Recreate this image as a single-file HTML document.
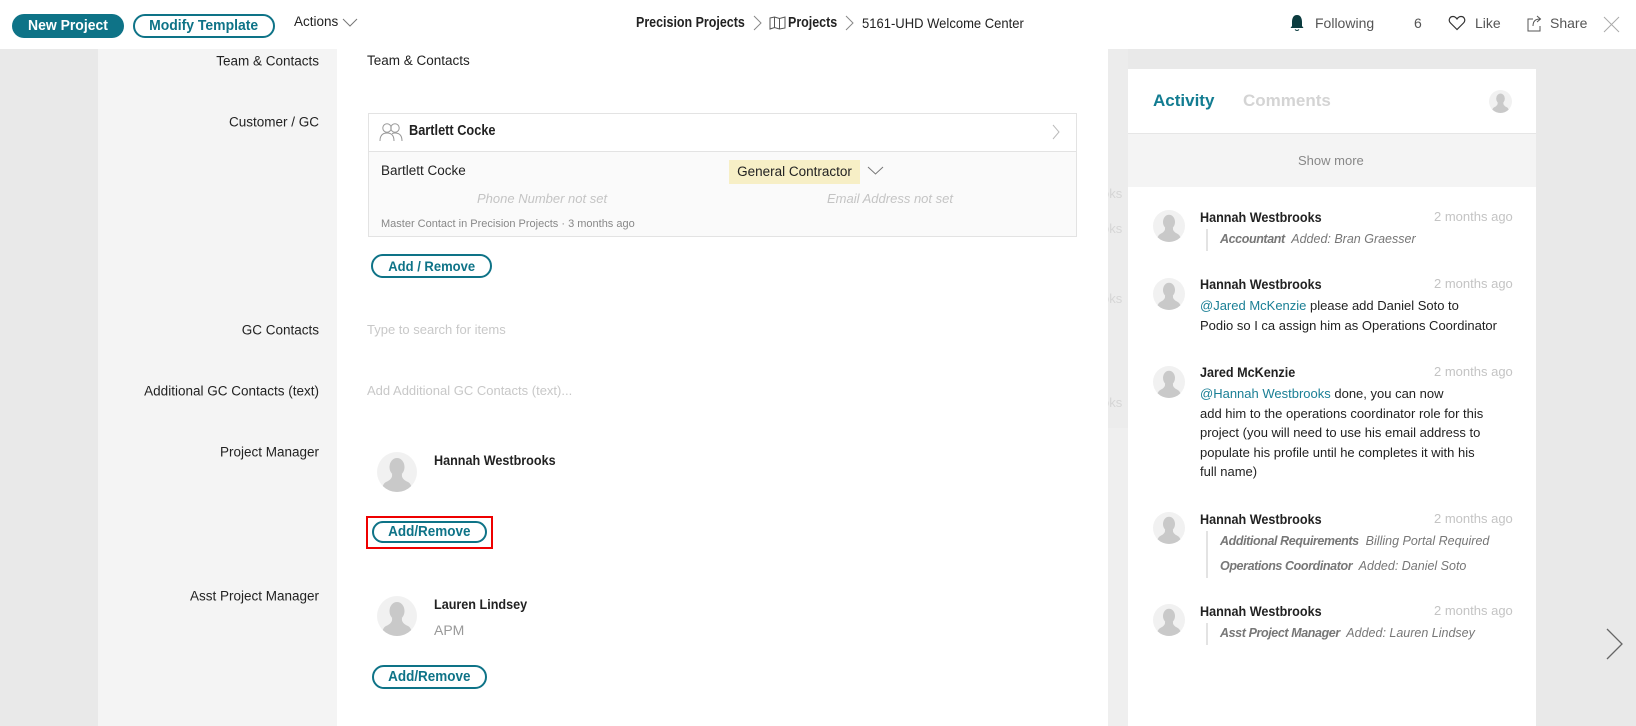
<!DOCTYPE html>
<html><head><meta charset="utf-8">
<style>
*{margin:0;padding:0;box-sizing:border-box}
body{width:1636px;height:726px;overflow:hidden;background:#e9e9e9;font-family:"Liberation Sans",sans-serif;font-size:13px;color:#222;position:relative}
.a{position:absolute;white-space:nowrap}
.hdr{position:absolute;left:0;top:0;width:1636px;height:49px;background:#fff}
.btn{position:absolute;border:2px solid #0e7387;border-radius:14px;color:#0e7387;font-size:14px;text-align:center;font-weight:bold}
.btn span{display:inline-block;transform:scaleX(.93)}
.lbl{position:absolute;right:1317px;white-space:nowrap;font-size:13.5px;color:#222;transform:translateY(-50%)}
.av{position:absolute;border-radius:50%;background:#f1f1f1;overflow:hidden}
.nm{font-weight:bold;font-size:14px;color:#222;transform:scaleX(.9);transform-origin:0 50%}
.tm{font-size:13px;color:#c4c4c4}
.lk{color:#1a7f95}
.sub{font-style:italic;color:#777;font-size:12.5px}
.sub b{font-weight:bold;font-size:12.5px;letter-spacing:-0.4px}
</style></head><body>
<svg width="0" height="0" style="position:absolute"><defs>
<symbol id="person" viewBox="0 0 40 40"><ellipse cx="20" cy="15" rx="7.5" ry="9" fill="#c9c9c9"/><path d="M15 22 Q16 27 9 30 Q5 32 5 40 L35 40 Q35 32 31 30 Q24 27 25 22 Z" fill="#c9c9c9"/></symbol>
</defs></svg>

<div class="hdr"></div>
<div class="a" style="left:12px;top:14px;width:112px;height:24px;background:#0e7387;border-radius:13px;color:#fff;font-weight:bold;font-size:15px;text-align:center;line-height:24px"><span style="display:inline-block;transform:scaleX(.93)">New Project</span></div>
<div class="btn" style="left:133px;top:14px;width:142px;height:24px;line-height:20px;font-size:15px"><span>Modify Template</span></div>
<div class="a" style="left:294px;top:14px;font-size:13.5px">Actions</div>
<svg class="a" style="left:342px;top:18px" width="16" height="10"><path d="M1 1 L8 8 L15 1" fill="none" stroke="#777" stroke-width="1"/></svg>

<div class="a" style="left:636px;top:15px;font-weight:bold;font-size:14.5px;transform:scaleX(.86);transform-origin:0 50%">Precision Projects</div>
<svg class="a" style="left:753px;top:15px" width="9" height="16"><path d="M1 1 L8 8 L1 15" fill="none" stroke="#888" stroke-width="1"/></svg>
<svg class="a" style="left:769px;top:16px" width="17" height="14"><path d="M1 2 L5.5 1 L10.5 2.5 L16 1 L16 12 L10.5 13 L5.5 11.5 L1 13 Z M5.5 1 V11.5 M10.5 2.5 V13" fill="none" stroke="#555" stroke-width="1"/></svg>
<div class="a" style="left:788px;top:15px;font-weight:bold;font-size:14.5px;transform:scaleX(.86);transform-origin:0 50%">Projects</div>
<svg class="a" style="left:845px;top:15px" width="9" height="16"><path d="M1 1 L8 8 L1 15" fill="none" stroke="#888" stroke-width="1"/></svg>
<div class="a" style="left:862px;top:15px;font-size:14px;transform:scaleX(.93);transform-origin:0 50%">5161-UHD Welcome Center</div>

<svg class="a" style="left:1290px;top:14px" width="14" height="18"><path d="M7 1 C3 1 2 5 2 8 L2 12 L0.5 14 L13.5 14 L12 12 L12 8 C12 5 11 1 7 1 Z" fill="#0b3b3f"/><path d="M5 15.5 Q7 17.5 9 15.5" stroke="#0b3b3f" fill="none"/></svg>
<div class="a" style="left:1315px;top:15px;font-size:14px;color:#555">Following</div>
<div class="a" style="left:1414px;top:15px;font-size:14px;color:#555">6</div>
<svg class="a" style="left:1448px;top:15px" width="18" height="16"><path d="M9 14.5 L2.5 8 C0 5.5 1.5 1.5 5 1.5 C7 1.5 8.3 3 9 4 C9.7 3 11 1.5 13 1.5 C16.5 1.5 18 5.5 15.5 8 Z" fill="none" stroke="#333" stroke-width="1.2"/></svg>
<div class="a" style="left:1475px;top:15px;font-size:14px;color:#555">Like</div>
<svg class="a" style="left:1527px;top:14px" width="16" height="18"><path d="M6 5 H1 V17 H13 V12" fill="none" stroke="#555"/><path d="M6 12 Q6 5 13 5 M10 2 L13.5 5 L10 8" fill="none" stroke="#555"/></svg>
<div class="a" style="left:1550px;top:15px;font-size:14px;color:#555">Share</div>
<svg class="a" style="left:1603px;top:16px" width="17" height="17"><path d="M1 1 L16 16 M16 1 L1 16" stroke="#aaa" stroke-width="1"/></svg>

<div class="a" style="left:98px;top:49px;width:239px;height:677px;background:#f4f4f4"></div>
<div class="a" style="left:337px;top:49px;width:771px;height:677px;background:#fff"></div>
<div class="a" style="left:1108px;top:49px;width:20px;height:379px;background:#ececec;overflow:hidden;color:#d6d6d6;font-size:13px">
<div style="position:absolute;left:-6px;top:137px">oks</div>
<div style="position:absolute;left:-6px;top:172px">oks</div>
<div style="position:absolute;left:-6px;top:242px">oks</div>
<div style="position:absolute;left:-6px;top:346px">oks</div>
</div>
<div class="a" style="left:1108px;top:428px;width:20px;height:298px;background:#efefef"></div>

<div class="lbl" style="top:61px">Team &amp; Contacts</div>
<div class="a" style="left:367px;top:53px;font-size:13.5px">Team &amp; Contacts</div>
<div class="lbl" style="top:122px">Customer / GC</div>

<div class="a" style="left:368px;top:113px;width:709px;height:124px;border:1px solid #e3e3e3;background:#fafafa">
<div style="position:absolute;left:0;top:0;right:0;height:38px;background:#fff;border-bottom:1px solid #e3e3e3"></div>
</div>
<svg class="a" style="left:379px;top:122px" width="24" height="20"><circle cx="8" cy="6" r="4.2" fill="none" stroke="#999"/><circle cx="16" cy="6" r="4.2" fill="none" stroke="#999"/><path d="M1 19 Q1 11 8 11 Q15 11 15 19 M13 11.5 Q15 11 16 11 Q23 11 23 19" fill="none" stroke="#999"/></svg>
<div class="a nm" style="left:409px;top:123px;font-size:14.5px;transform:scaleX(.88)">Bartlett Cocke</div>
<svg class="a" style="left:1052px;top:124px" width="8" height="16"><path d="M1 1 L7 8 L1 15" fill="none" stroke="#bbb"/></svg>
<div class="a" style="left:381px;top:163px;font-size:13.5px">Bartlett Cocke</div>
<div class="a" style="left:729px;top:160px;width:131px;height:24px;background:#f7efc6;font-size:13.5px;line-height:24px;text-align:center">General Contractor</div>
<svg class="a" style="left:867px;top:166px" width="17" height="10"><path d="M1 1 L8.5 8 L16 1" fill="none" stroke="#777"/></svg>
<div class="a" style="left:477px;top:191px;font-size:13px;font-style:italic;color:#c4c4c4">Phone Number not set</div>
<div class="a" style="left:827px;top:191px;font-size:13px;font-style:italic;color:#c4c4c4">Email Address not set</div>
<div class="a" style="left:381px;top:218px;font-size:11px;color:#888">Master Contact in Precision Projects · 3 months ago</div>
<div class="btn" style="left:371px;top:254px;width:121px;height:24px;line-height:20px"><span>Add / Remove</span></div>

<div class="lbl" style="top:330px">GC Contacts</div>
<div class="a" style="left:367px;top:322px;color:#c8c8c8;font-size:13px">Type to search for items</div>
<div class="lbl" style="top:391px">Additional GC Contacts (text)</div>
<div class="a" style="left:367px;top:383px;color:#c8c8c8;font-size:13px">Add Additional GC Contacts (text)...</div>

<div class="lbl" style="top:452px">Project Manager</div>
<div class="av" style="left:377px;top:452px;width:40px;height:40px"><svg width="40" height="40"><use href="#person"/></svg></div>
<div class="a nm" style="left:434px;top:452px">Hannah Westbrooks</div>
<div class="a" style="left:366px;top:516px;width:127px;height:33px;border:2px solid #e00"></div>
<div class="btn" style="left:372px;top:521px;width:115px;height:22px;line-height:18px;font-size:14.5px"><span>Add/Remove</span></div>

<div class="lbl" style="top:596px">Asst Project Manager</div>
<div class="av" style="left:377px;top:596px;width:40px;height:40px"><svg width="40" height="40"><use href="#person"/></svg></div>
<div class="a nm" style="left:434px;top:596px">Lauren Lindsey</div>
<div class="a" style="left:434px;top:622px;font-size:14px;color:#999">APM</div>
<div class="btn" style="left:372px;top:665px;width:115px;height:24px;line-height:20px;font-size:14.5px"><span>Add/Remove</span></div>

<div class="a" style="left:1128px;top:69px;width:408px;height:657px;background:#fff"></div>
<div class="a" style="left:1128px;top:133px;width:408px;height:54px;background:#f4f4f4;border-top:1px solid #e6e6e6"></div>
<div class="a" style="left:1153px;top:91px;font-size:17px;font-weight:bold;color:#127c91">Activity</div>
<div class="a" style="left:1243px;top:91px;font-size:17px;font-weight:bold;color:#d4d4d4">Comments</div>
<div class="av" style="left:1489px;top:90px;width:23px;height:23px"><svg width="23" height="23" viewBox="0 0 40 40"><use href="#person"/></svg></div>
<div class="a" style="left:1298px;top:153px;font-size:13px;color:#888">Show more</div>

<div class="av" style="left:1153px;top:210px;width:32px;height:32px"><svg width="32" height="32" viewBox="0 0 40 40"><use href="#person"/></svg></div>
<div class="a nm" style="left:1200px;top:209px">Hannah Westbrooks</div>
<div class="a tm" style="left:1434px;top:209px">2 months ago</div>
<div class="a" style="left:1206px;top:229px;width:2px;height:22px;background:#e3e3e3"></div>
<div class="a sub" style="left:1220px;top:232px"><b>Accountant</b>&nbsp; Added: Bran Graesser</div>

<div class="av" style="left:1153px;top:278px;width:32px;height:32px"><svg width="32" height="32" viewBox="0 0 40 40"><use href="#person"/></svg></div>
<div class="a nm" style="left:1200px;top:276px">Hannah Westbrooks</div>
<div class="a tm" style="left:1434px;top:276px">2 months ago</div>
<div class="a" style="left:1200px;top:296px;line-height:20px;font-size:13px"><span class="lk">@Jared McKenzie</span> please add Daniel Soto to<br>Podio so I ca assign him as Operations Coordinator</div>

<div class="av" style="left:1153px;top:366px;width:32px;height:32px"><svg width="32" height="32" viewBox="0 0 40 40"><use href="#person"/></svg></div>
<div class="a nm" style="left:1200px;top:364px">Jared McKenzie</div>
<div class="a tm" style="left:1434px;top:364px">2 months ago</div>
<div class="a" style="left:1200px;top:384px;line-height:19.5px;font-size:13px"><span class="lk">@Hannah Westbrooks</span> done, you can now<br>add him to the operations coordinator role for this<br>project (you will need to use his email address to<br>populate his profile until he completes it with his<br>full name)</div>

<div class="av" style="left:1153px;top:512px;width:32px;height:32px"><svg width="32" height="32" viewBox="0 0 40 40"><use href="#person"/></svg></div>
<div class="a nm" style="left:1200px;top:511px">Hannah Westbrooks</div>
<div class="a tm" style="left:1434px;top:511px">2 months ago</div>
<div class="a" style="left:1206px;top:531px;width:2px;height:47px;background:#e3e3e3"></div>
<div class="a sub" style="left:1220px;top:534px"><b>Additional Requirements</b>&nbsp; Billing Portal Required</div>
<div class="a sub" style="left:1220px;top:559px"><b>Operations Coordinator</b>&nbsp; Added: Daniel Soto</div>

<div class="av" style="left:1153px;top:604px;width:32px;height:32px"><svg width="32" height="32" viewBox="0 0 40 40"><use href="#person"/></svg></div>
<div class="a nm" style="left:1200px;top:603px">Hannah Westbrooks</div>
<div class="a tm" style="left:1434px;top:603px">2 months ago</div>
<div class="a" style="left:1206px;top:623px;width:2px;height:22px;background:#e3e3e3"></div>
<div class="a sub" style="left:1220px;top:626px"><b>Asst Project Manager</b>&nbsp; Added: Lauren Lindsey</div>

<svg class="a" style="left:1606px;top:628px" width="18" height="32"><path d="M1 1 L16 16 L1 31" fill="none" stroke="#666" stroke-width="1.3"/></svg>
</body></html>
